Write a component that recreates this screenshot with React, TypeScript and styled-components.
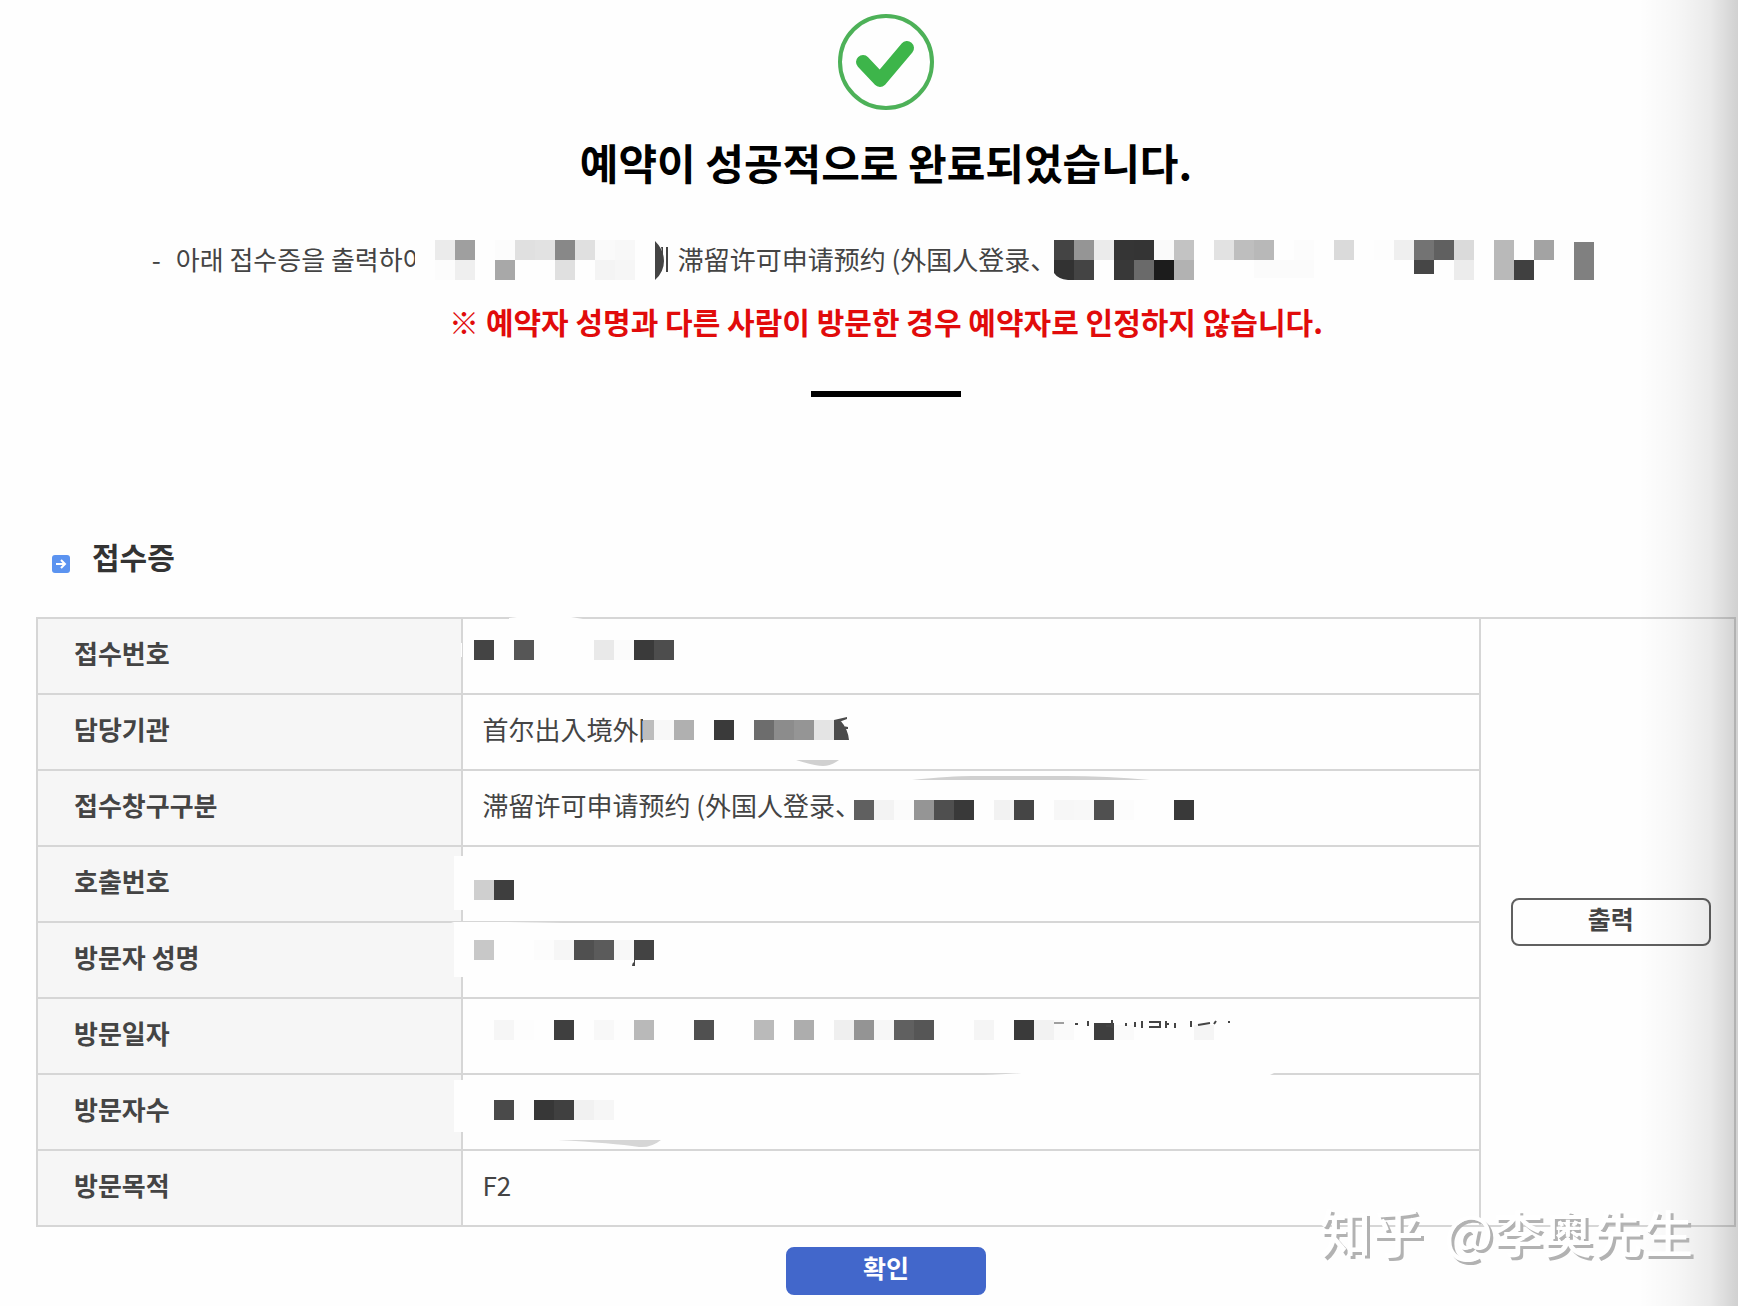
import React from "react";
import styled, { createGlobalStyle } from "styled-components";

const GlobalStyle = createGlobalStyle`
  *, *::before, *::after { box-sizing: border-box; }
  body {
    margin: 0;
    background: #fefefe;
    color: #444;
    font-family: "Noto Sans CJK KR", "Noto Sans CJK SC", sans-serif;
    font-size: 26px;
    line-height: 40px;
  }
`;

const Page = styled.div`
  position: relative;
  overflow: hidden;
  padding: 14px 2px 11px 36px;
`;

const Result = styled.header`
  display: flex;
  flex-direction: column;
  align-items: center;
`;

const Title = styled.h1`
  margin: 22px 0 0;
  color: #000;
  font-size: 42px;
  font-weight: 700;
  line-height: 60px;
`;

const Notice = styled.p`
  display: flex;
  justify-content: center;
  align-items: center;
  margin: 48px 0 0;
  line-height: 38px;
  white-space: pre;
`;

const NoticeText = styled.span`
  padding-bottom: 2px;
`;

const Dash = styled.span`
  margin-right: 15px;
`;

const Warning = styled.p`
  margin: 19px 0 0;
  color: #e10b0b;
  font-size: 30px;
  font-weight: 700;
  line-height: 44px;
`;

const Divider = styled.hr`
  width: 150px;
  height: 6px;
  margin: 48px 0 0;
  border: 0;
  background: #000;
`;

const SectionHeading = styled.h2`
  display: flex;
  align-items: center;
  gap: 22px;
  margin: 137px 0 39px;
  padding-left: 16px;
  color: #333;
  font-size: 30px;
  font-weight: 700;
  line-height: 44px;

  svg { margin-top: 16px; }
`;

const Table = styled.table`
  width: 100%;
  table-layout: fixed;
  border-collapse: collapse;

  th, td {
    padding: 0;
    border: 2px solid #d6d6d6;
  }
`;

const Col = styled.col<{ $share: number }>`
  width: ${(p) => p.$share}%;
`;

const Label = styled.th`
  background: #f6f6f6;
  font-weight: 700;
  text-align: left;
`;

const CellBody = styled.div<{ $indent: number }>`
  position: relative;
  display: flex;
  align-items: center;
  height: 74px;
  padding: 0 20px 6px ${(p) => p.$indent}px;
  white-space: nowrap;
`;

const Action = styled.div`
  display: flex;
  justify-content: center;
  padding-left: 6px;
`;

const Button = styled.button<{ $primary?: boolean }>`
  width: 200px;
  height: 48px;
  padding: 0 0 8px;
  border: 2px solid ${(p) => (p.$primary ? "#4267cb" : "#606060")};
  border-radius: 8px;
  background: ${(p) => (p.$primary ? "#4267cb" : "transparent")};
  color: ${(p) => (p.$primary ? "#fff" : "#444")};
  font: inherit;
  font-size: 25px;
  font-weight: 700;
  line-height: 36px;
`;

const Footer = styled.footer`
  display: flex;
  justify-content: center;
  margin-top: 20px;
`;

const InlineMask = styled.svg<{ $overlap: number }>`
  position: relative;
  flex: none;
  margin-left: -${(p) => p.$overlap}px;
`;

const CellMask = styled.svg`
  position: absolute;
  top: 0;
  left: 0;
  overflow: visible;
  pointer-events: none;
`;

const EdgeShade = styled.div`
  position: absolute;
  inset: 0 0 0 auto;
  width: 100px;
  background: linear-gradient(
    to right,
    rgba(0, 0, 0, 0),
    rgba(0, 0, 0, 0.03) 40%,
    rgba(0, 0, 0, 0.08) 72%,
    rgba(0, 0, 0, 0.18)
  );
  pointer-events: none;
`;

const Watermark = styled.div`
  position: absolute;
  right: 45px;
  bottom: 40px;
  display: flex;
  align-items: center;
  gap: 21px;
  color: #fff;
  font-family: "Noto Sans CJK SC", sans-serif;
  font-size: 50px;
  font-weight: 500;
  line-height: 70px;
  text-shadow: 3px 3px 0 #b2b2b2;
`;

const SiteName = styled.span`
  font-size: 52px;
`;

type Tile = [x: number, shade: string, y?: number, height?: number, width?: number];

const Tiles = ({ y = 0, tiles }: { y?: number; tiles: Tile[] }) => (
  <g shapeRendering="crispEdges">
    {tiles.map(([x, shade, ty = y, h = 20, w = 20], i) => (
      <rect key={i} x={x} y={ty} width={w} height={h} fill={`#${shade}`} />
    ))}
  </g>
);

const WHITE = "#fefefe";

const CheckIcon = () => (
  <svg width="96" height="96" viewBox="0 0 96 96" fill="none" aria-hidden="true">
    <circle cx="48" cy="48" r="46" stroke="#4db158" strokeWidth="4" />
    <path d="M25 48 42 66 69 34" stroke="#3db54a" strokeWidth="14" strokeLinecap="round" strokeLinejoin="round" />
  </svg>
);

const ArrowIcon = () => (
  <svg width="18" height="18" viewBox="0 0 18 18" fill="none" aria-hidden="true">
    <rect width="18" height="18" rx="3" fill="#5b93f0" />
    <path d="M4 9h9M9 5l4 4-4 4" stroke="#fff" strokeWidth="2" />
  </svg>
);

const OfficeMask = () => (
  <>
    <rect x="180" y="18" width="60" height="40" fill={WHITE} />
    <Tiles
      y={25}
      tiles={[
        [180, "bdbdbd", 25, 20, 11], [191, "f8f8f8"], [211, "b0b0b0"], [251, "3a3a3a"],
        [291, "6d6d6d"], [311, "8c8c8c"], [331, "959595"], [351, "e4e4e4"],
      ]}
    />
    <path d="M371 25h6q8 9 9 20h-15zM371 25l13-3v2l-8 3zM380 31l5 1v2h-4z" fill="#4b4b4b" />
    <path d="M333 65h43q-8 6-16 6-8 0-27-6z" fill="#d0d0d0" />
  </>
);

const WindowMask = () => (
  <>
    <path d="M449 9q40-4 60-4h94q40 0 84 4z" fill="#d0d0d0" />
    <Tiles
      y={29}
      tiles={[
        [391, "606060"], [411, "f3f3f3"], [431, "fbfbfb"], [451, "959595"], [471, "4f4f4f"],
        [491, "393939"], [531, "f2f2f2"], [551, "454545"], [591, "f7f7f7"], [611, "f8f8f8"],
        [631, "505050"], [651, "fcfcfc"], [711, "393939"],
      ]}
    />
  </>
);

const DateMask = () => (
  <>
    <path d="M520 76q30-1 50-3h235q6 1 10-1l-10 5H520z" fill={WHITE} />
    <Tiles
      y={21}
      tiles={[
        [31, "f6f6f6"], [51, "fdfdfd"], [91, "3f3f3f"], [131, "f8f8f8"], [151, "fdfdfd"],
        [171, "b9b9b9"], [231, "505050"], [291, "bababa"], [331, "adadad"], [371, "efefef"],
        [391, "949494"], [411, "f7f7f7"], [431, "606060"], [451, "565656"], [511, "f5f5f5"],
        [551, "3a3a3a"], [571, "f2f2f2"], [591, "fafafa"], [631, "3e3e3e", 24, 17],
        [651, "fafafa", 26, 15], [731, "f5f5f5", 26, 15],
      ]}
    />
    <path d="M591 24h10" stroke="#444" />
    <path
      d="M612 25h3M625 22v5M649 21v8M643 27h5M663 24v3M672 23v5M679 22v7M686 23h11v6M686 28h11M703 22v7M703 25h3M712 24v5M728 22v6M735 26l12-2M753 22l-2 3M765 23h2"
      fill="none"
      stroke="#444"
      strokeWidth="2"
    />
  </>
);

type Row = { label: string; value?: string; mask?: React.ReactNode };

const rows: Row[] = [
  {
    label: "접수번호",
    mask: (
      <>
        <path d="M46-1 54-2h54l12 2v1H46zM-2 24h1v14h-1z" fill={WHITE} />
        <Tiles
          y={21}
          tiles={[[11, "444"], [51, "565656"], [131, "e9e9e9"], [151, "fbfbfb"], [171, "3a3a3a"], [191, "4d4d4d"]]}
        />
      </>
    ),
  },
  { label: "담당기관", value: "首尔出入境外國", mask: <OfficeMask /> },
  { label: "접수창구구분", value: "滞留许可申请预约 (外国人登录、", mask: <WindowMask /> },
  {
    label: "호출번호",
    mask: (
      <>
        <rect x="-9" y="9" width="10" height="54" fill={WHITE} />
        <Tiles y={33} tiles={[[11, "cfcfcf"], [31, "3e3e3e"]]} />
      </>
    ),
  },
  {
    label: "방문자 성명",
    mask: (
      <>
        <path d="M-12-1H40l60 1H1v54H-9V0z" fill={WHITE} />
        <Tiles
          y={17}
          tiles={[
            [11, "c8c8c8"], [71, "fcfcfc"], [91, "f6f6f6"], [111, "505050"], [131, "5b5b5b"],
            [151, "f8f8f8"], [171, "434343"],
          ]}
        />
        <path d="M171 36h1v7h-3q0-3 2-4z" fill="#444" />
      </>
    ),
  },
  { label: "방문일자", mask: <DateMask /> },
  {
    label: "방문자수",
    mask: (
      <>
        <rect x="-9" y="5" width="10" height="52" fill={WHITE} />
        <Tiles
          y={25}
          tiles={[[31, "4a4a4a"], [51, "fdfdfd"], [71, "373737"], [91, "404040"], [111, "f1f1f1"], [131, "f6f6f6"]]}
        />
        <path d="M95 65h103q-10 8-22 7-26-4-81-7z" fill="#d6d6d6" />
      </>
    ),
  },
  { label: "방문목적", value: "F2" },
];

export default function App() {
  return (
    <Page>
      <GlobalStyle />
      <Result>
        <CheckIcon />
        <Title>예약이 성공적으로 완료되었습니다.</Title>
        <Notice>
          <NoticeText>
            <Dash>-</Dash>아래 접수증을 출력하여
          </NoticeText>
          <InlineMask $overlap={12} width="263" height="40" aria-hidden="true">
            <rect width="263" height="40" fill={WHITE} />
            <Tiles
              tiles={[
                [20, "ebebeb"], [40, "9f9f9f"], [80, "fcfcfc"], [100, "e0e0e0"], [120, "e2e2e2"],
                [140, "888888"], [160, "e0e0e0"], [180, "fafafa"], [200, "f8f8f8"],
                [20, "fcfcfc", 20], [40, "efefef", 20], [80, "a8a8a8", 20], [140, "e0e0e0", 20],
                [180, "f4f4f4", 20], [200, "f6f6f6", 20],
              ]}
            />
            <path d="M240 1q9 9 9 20t-9 19zM251 7h2v25h-2zM246 7h2v8z" fill="#444" />
          </InlineMask>
          <NoticeText>滞留许可申请预约 (外国人登录、</NoticeText>
          <InlineMask $overlap={16} width="580" height="40" aria-hidden="true">
            <Tiles
              tiles={[
                [14, "444"], [34, "959595"], [54, "ebebeb"], [74, "353535"], [94, "343434"],
                [114, "fafafa"], [134, "c3c3c3"], [174, "e2e2e2"], [194, "bebebe"], [214, "b8b8b8"],
                [254, "fcfcfc"], [294, "dadada"], [334, "fdfdfd"], [354, "efefef"], [374, "737373"],
                [394, "606060"], [414, "dadada"], [454, "b9b9b9"], [494, "a3a3a3"], [514, "fdfdfd"],
                [34, "444", 20], [74, "383838", 20], [94, "6a6a6a", 20], [114, "1c1c1c", 20],
                [134, "b2b2b2", 20], [214, "fbfbfb", 20, 18, 60], [374, "464646", 20, 14],
                [414, "ececec", 20], [454, "b9b9b9", 20], [474, "404040", 20], [534, "808080", 2, 38],
              ]}
            />
            <path d="M14 20h20v20h-6q-10-1-14-7z" fill="#323232" />
          </InlineMask>
        </Notice>
        <Warning>※ 예약자 성명과 다른 사람이 방문한 경우 예약자로 인정하지 않습니다.</Warning>
        <Divider />
      </Result>

      <SectionHeading>
        <ArrowIcon />
        접수증
      </SectionHeading>
      <Table>
        <colgroup>
          <Col $share={25} />
          <Col $share={60} />
          <Col $share={15} />
        </colgroup>
        <tbody>
          {rows.map((row, i) => (
            <tr key={row.label}>
              <Label scope="row">
                <CellBody $indent={36}>{row.label}</CellBody>
              </Label>
              <td>
                <CellBody $indent={20}>
                  {row.value}
                  {row.mask && (
                    <CellMask width="860" height="74" aria-hidden="true">
                      {row.mask}
                    </CellMask>
                  )}
                </CellBody>
              </td>
              {i === 0 && (
                <td rowSpan={rows.length}>
                  <Action>
                    <Button type="button">출력</Button>
                  </Action>
                </td>
              )}
            </tr>
          ))}
        </tbody>
      </Table>
      <Footer>
        <Button type="button" $primary>확인</Button>
      </Footer>
      <EdgeShade />
      <Watermark>
        <SiteName>知乎</SiteName>
        <span>@李奥先生</span>
      </Watermark>
    </Page>
  );
}
